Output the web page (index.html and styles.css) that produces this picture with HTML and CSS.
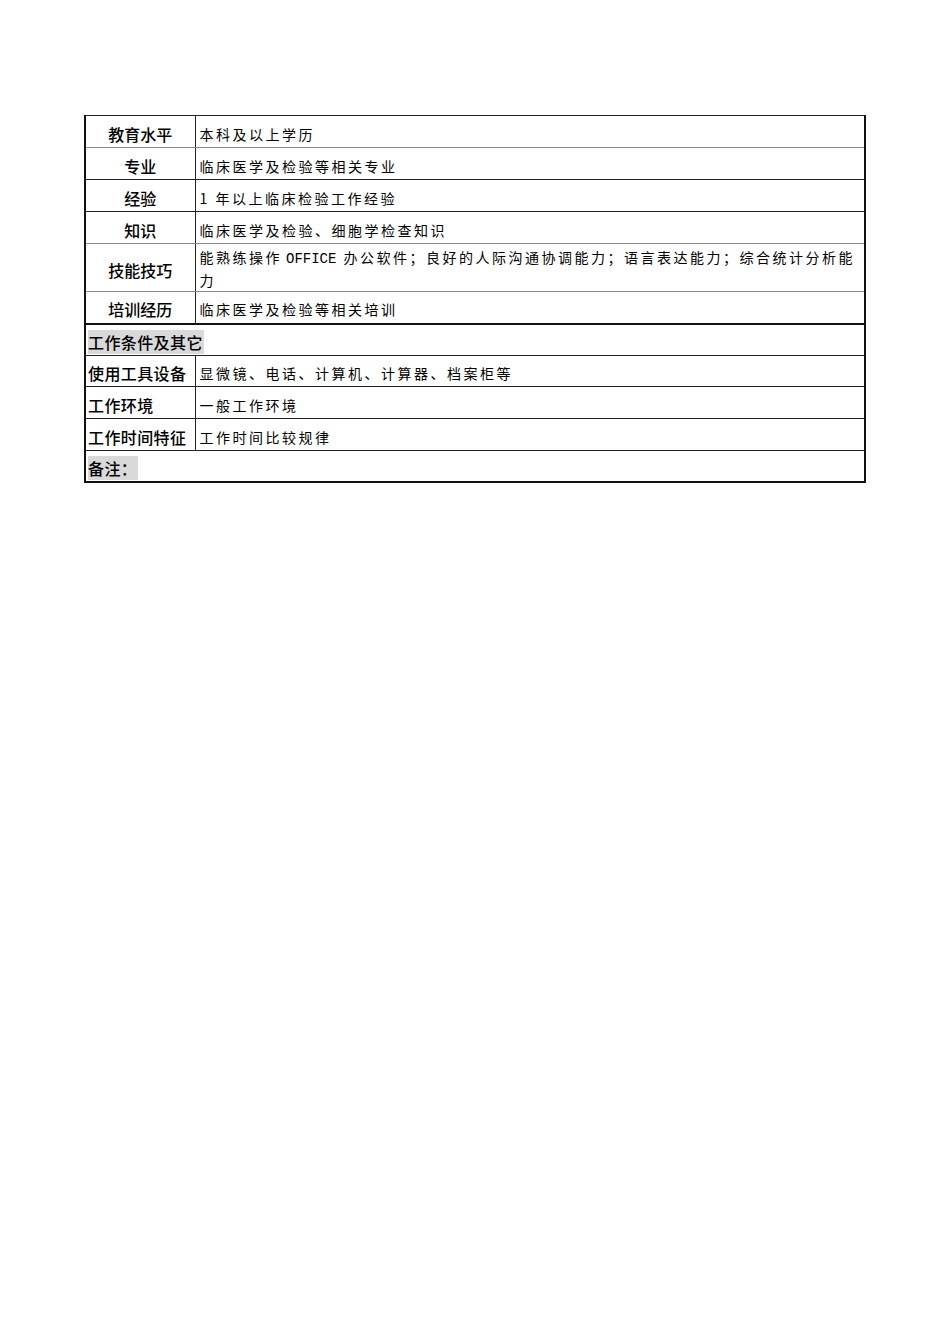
FILE: index.html
```html
<!DOCTYPE html>
<html lang="zh-CN">
<head>
<meta charset="utf-8">
<title>岗位说明</title>
<link rel="stylesheet" href="styles.css">
</head>
<body>
<div class="page">
<table class="sheet">
  <colgroup><col class="c-label"><col class="c-value"></colgroup>
  <tr class="r b-gray"><th class="lab center">教育水平</th><td class="val">本科及以上学历</td></tr>
  <tr class="r"><th class="lab center">专业</th><td class="val">临床医学及检验等相关专业</td></tr>
  <tr class="r"><th class="lab center">经验</th><td class="val">1 年以上临床检验工作经验</td></tr>
  <tr class="r b-gray"><th class="lab center">知识</th><td class="val">临床医学及检验、细胞学检查知识</td></tr>
  <tr class="r tall b-gray"><th class="lab center">技能技巧</th><td class="val wrap">能熟练操作<span class="lat">OFFICE</span>办公软件；良好的人际沟通协调能力；语言表达能力；综合统计分析能力</td></tr>
  <tr class="r b-thick"><th class="lab center">培训经历</th><td class="val">临床医学及检验等相关培训</td></tr>
  <tr class="r"><th class="lab left section" colspan="2"><span class="hl">工作条件及其它</span></th></tr>
  <tr class="r h31"><th class="lab left">使用工具设备</th><td class="val">显微镜、电话、计算机、计算器、档案柜等</td></tr>
  <tr class="r"><th class="lab left">工作环境</th><td class="val">一般工作环境</td></tr>
  <tr class="r"><th class="lab left">工作时间特征</th><td class="val">工作时间比较规律</td></tr>
  <tr class="r last"><th class="lab left section" colspan="2"><span class="hl">备注：</span></th></tr>
</table>
</div>
</body>
</html>
```

FILE: styles.css
```css
html, body {
  margin: 0;
  padding: 0;
  background: #fff;
}
.page {
  padding: 115px 0 0 84px;
}
.sheet {
  width: 782px;
  border-collapse: collapse;
  table-layout: fixed;
  border-top: 1px solid #222;
  border-left: 2px solid #111;
  border-right: 2px solid #111;
  border-bottom: 2px solid #111;
}
.c-label { width: 110px; }
.sheet th, .sheet td {
  padding: 0;
  border-bottom: 1px solid #222;
}
.r { height: 32px; }
.r.h31 { height: 31px; }
.r.tall { height: 48px; }
.r.last { height: 31px; }
.r.b-gray th, .r.b-gray td { border-bottom-color: #8a8a8a; }
.r.b-thick th, .r.b-thick td { border-bottom: 2px solid #111; }
.r.last th { border-bottom: none; }
.lab {
  font-family: "Noto Sans CJK SC", "Noto Sans", sans-serif;
  font-weight: 500;
  font-size: 16px;
  color: #000;
  border-right: 1px solid #222;
  vertical-align: middle;
  padding-top: 4px !important;
  line-height: 20px;
  white-space: nowrap;
  overflow: hidden;
}
.lab.center { text-align: center; }
.lab.left { text-align: left; padding-left: 2px !important; letter-spacing: 0.4px; }
.lab.section { border-right: none; }
.hl {
  background: #d9d9d9;
  padding-right: 1px;
}
.val {
  font-family: "Noto Sans CJK SC", "Noto Sans", sans-serif;
  font-weight: 400;
  font-size: 14px;
  letter-spacing: 2.5px;
  color: #000;
  padding-left: 4px !important;
  padding-right: 2px !important;
  padding-top: 4px !important;
  vertical-align: middle;
  line-height: 20px;
  white-space: nowrap;
}
.lat {
  font-family: "Liberation Mono", "DejaVu Sans Mono", monospace;
  letter-spacing: 0;
  font-size: 14px;
  margin: 0 7px 0 4px;
}
.val.wrap {
  white-space: normal;
  line-height: 21px;
  padding-top: 2px !important;
}
```
